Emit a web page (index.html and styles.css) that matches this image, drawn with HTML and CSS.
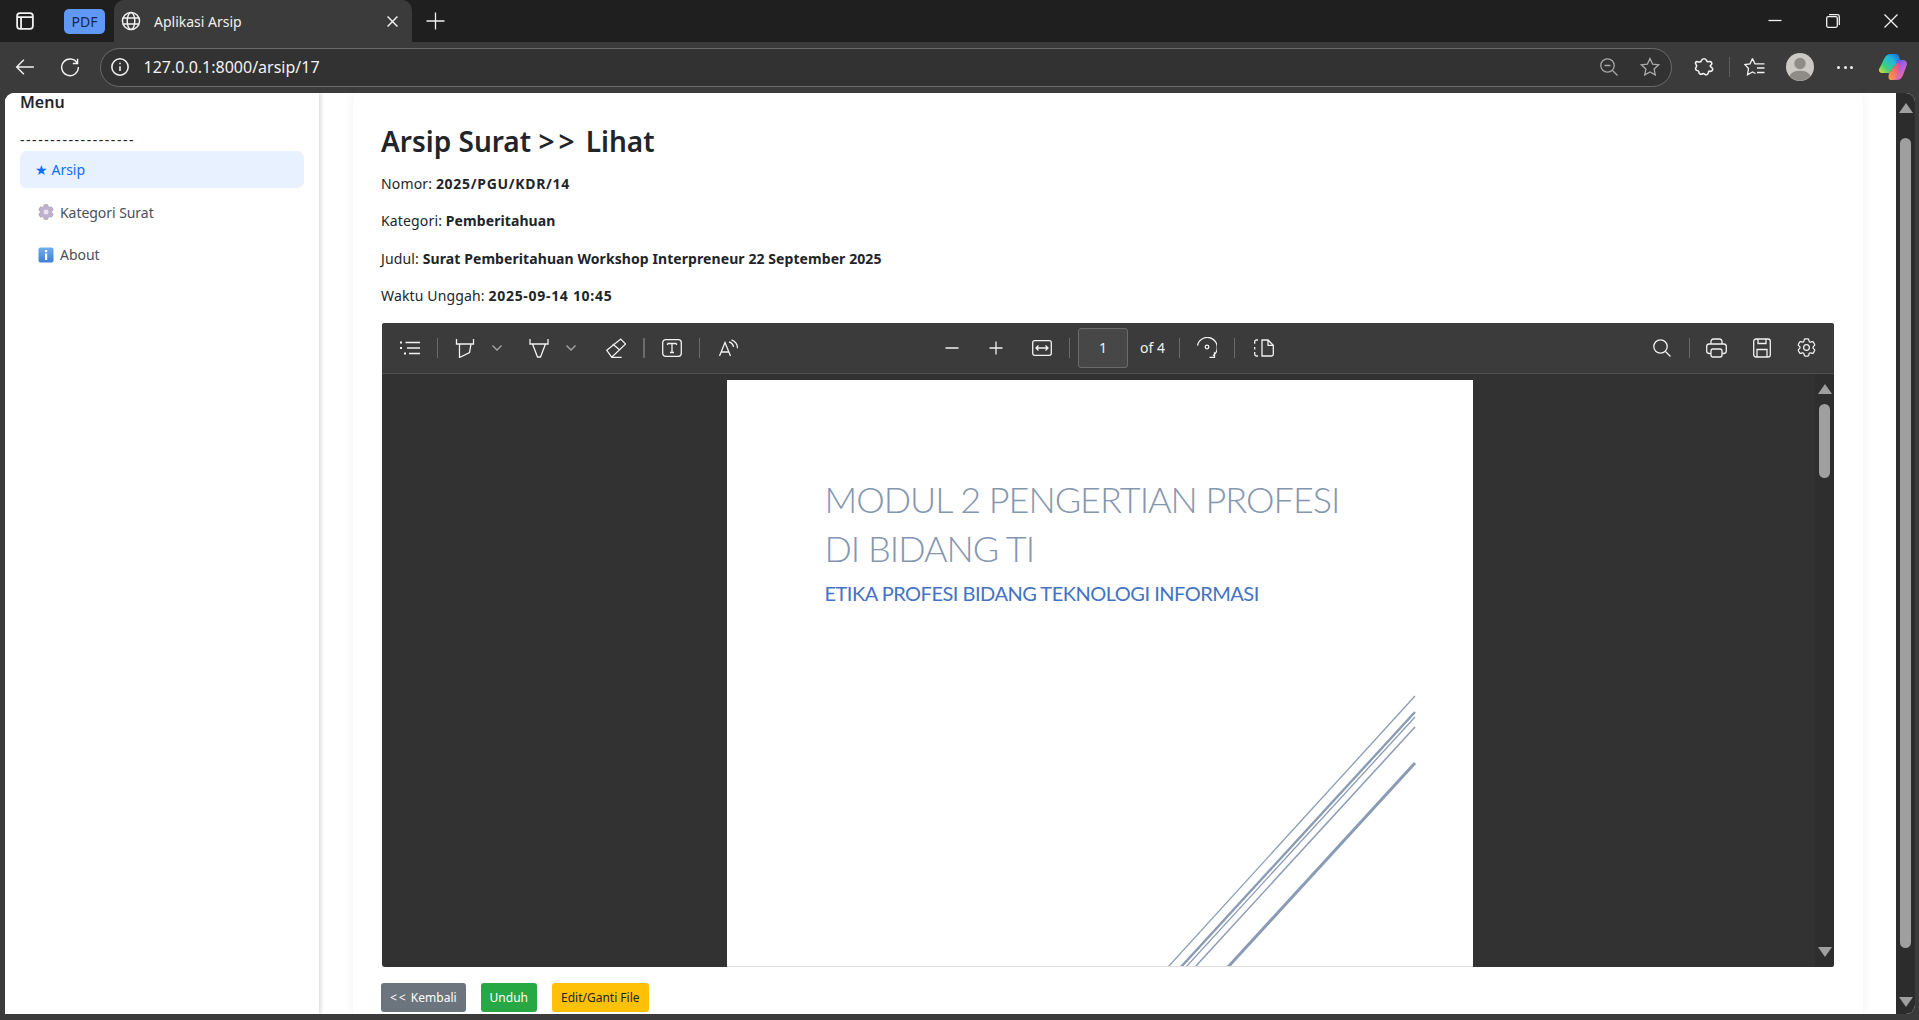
FILE: index.html
```html
<!DOCTYPE html>
<html lang="en">
<head>
<meta charset="UTF-8">
<meta name="viewport" content="width=device-width, initial-scale=1.0">
<title>Aplikasi Arsip</title>
<link rel="stylesheet" href="styles.css">
</head>
<body>

<div class="tabstrip">
  <svg class="ic ic-bold strip-panel" width="18" height="18" viewBox="0 0 16 16"><rect x="1" y="1" width="14" height="14" rx="2.500"/><path d="M1 4.500h14M4.500 4.500V15"/></svg>
  <span class="pdf-pill">PDF</span>
  <div class="tab">
    <svg class="ic" width="20" height="20" viewBox="0 0 18 18"><circle cx="9" cy="9" r="7.700"/><ellipse cx="9" cy="9" rx="3.400" ry="7.700"/><path d="M1.800 6.300h14.400M1.800 11.700h14.400"/></svg>
    <span class="tab-title">Aplikasi Arsip</span>
    <svg class="ic tab-close" width="11" height="11" viewBox="0 0 10 10"><path d="M.5.5l9 9M9.500.5l-9 9"/></svg>
  </div>
  <svg class="ic strip-new" width="19" height="18" viewBox="0 0 19 18"><path d="M9.500 .5v17M.5 9h18"/></svg>
  <div class="win-controls">
    <svg class="ic" width="14" height="14" viewBox="0 0 14 14"><path d="M.5 6.500h13"/></svg>
    <svg class="ic" width="14" height="14" viewBox="0 0 14 14"><rect x=".7" y="2.700" width="10.600" height="10.600" rx="1.500"/><path d="M3 .7h8.500a1.800 1.800 0 0 1 1.800 1.800V11"/></svg>
    <svg class="ic" width="14" height="14" viewBox="0 0 14 14"><path d="M.5.5l13 13M13.500.5l-13 13"/></svg>
  </div>
</div>

<div class="browserbar">
  <svg class="ic nav-back" width="20" height="18" viewBox="0 0 18 16"><path d="M17 8H1.500M8 1.500L1.500 8 8 14.500"/></svg>
  <svg class="ic nav-reload" width="20" height="20" viewBox="0 0 18 18"><path d="M15.500 5.500A7.500 7.500 0 1 0 16.500 9M11.500 5.800h4.300V1.500"/></svg>
  <div class="addressbar">
    <svg class="ic" width="18" height="18" viewBox="0 0 15 15"><circle cx="7.500" cy="7.500" r="6.800"/><path d="M7.500 6.800v4M7.500 4v1.200"/></svg>
    <span class="url">127.0.0.1:8000/arsip/17</span>
    <svg class="ic ic-dim addr-zoom" width="18" height="18" viewBox="0 0 18 18"><circle cx="7.500" cy="7.500" r="6.700"/><path d="M4.500 7.500h6M12.500 12.500l5 5"/></svg>
    <svg class="ic ic-dim addr-star" width="20" height="20" viewBox="0 0 20 20"><path d="M10 1.500l2.600 5.600 6 .7-4.500 4.100 1.200 6L10 15l-5.300 2.900 1.200-6L1.400 7.800l6-.7z"/></svg>
  </div>
  <svg class="ic bar-ext" width="20" height="20" viewBox="0 0 19 19"><path d="M7 3.500a2.600 2.600 0 0 1 5 0c.3 1 1.700 1 2.700.8 1.600-.2 2.700 1.300 2 2.700-.4.800-1.300.9-1.300 1.700 0 .9 2.400 1 2.400 2.900 0 1.500-1.900 2.300-2.800 1.900-1-.3-1.300.5-1.400 1.400-.3 1.700-1.900 2.600-3.200 1.600-.8-.6-1.300-1.200-2.200-.6-1.700 1.100-3.500.1-3.600-1.700-.1-1-.5-1.300-1.500-1.400-1.500-.2-2.300-1.800-1-3.300.6-.8.6-1.400 0-2.200C.6 5.800 1.700 4 3.500 4.500c1.500.4 3.100.4 3.500-1z"/></svg>
  <span class="bar-sep"></span>
  <svg class="ic bar-fav" width="21" height="20" viewBox="0 0 21 20"><path d="M8.500 1.500L11 6.800h9.500M13 11h7.500M13 15.500h7.500M8.500 1.500L6 6.800l-5.200.7 3.700 4-1 6.300 5-2.800 3 1.500"/></svg>
  <svg class="bar-avatar" width="28" height="28" viewBox="0 0 28 28"><circle cx="14" cy="14" r="14" fill="#cbc9c5"/><circle cx="14" cy="10.500" r="5.700" fill="#8f8b87"/><path d="M3.500 23a11 7.500 0 0 1 21 0 14 14 0 0 1-21 0z" fill="#8f8b87"/></svg>
  <span class="bar-dots"><i></i><i></i><i></i></span>
  <svg class="bar-copilot" width="28" height="26" viewBox="0 0 28 26">
    <defs>
      <linearGradient id="copA" x1="1" y1="0" x2="0" y2="1"><stop offset="0" stop-color="#1f5fd8"/><stop offset=".35" stop-color="#1fb8dc"/><stop offset=".7" stop-color="#3ed07a"/><stop offset="1" stop-color="#f6d83a"/></linearGradient>
      <linearGradient id="copB" x1="0" y1="0" x2=".6" y2="1"><stop offset="0" stop-color="#3a55e0"/><stop offset=".45" stop-color="#a85ae8"/><stop offset="1" stop-color="#f76ca4"/></linearGradient>
      <linearGradient id="copC" x1="1" y1="0" x2="0" y2="1"><stop offset="0" stop-color="#e8487a"/><stop offset="1" stop-color="#f9a24a"/></linearGradient>
    </defs>
    <path d="M12 0h5c1.500 0 2.500.8 3 2.500l1 3.500-11 13H3c-2.500 0-3.500-2-2.800-4.200L5 5C6.500 1.500 9 0 12 0z" fill="url(#copA)"/>
    <path d="M18 6h6c3 0 4.500 2.500 3.800 5L24 21c-1 3-3.500 5-6.500 5H14z" fill="url(#copB)"/>
    <path d="M10 19l8-10c1-.8 2.500 0 2.300 1.500L19 20c-.5 3.500-2.500 6-6 6h-1c-2.500 0-3-2-2-7z" fill="url(#copC)"/>
  </svg>
</div>

<div class="viewport">
  <aside class="sidebar">
    <h5 class="menu-title">Menu</h5>
    <div class="menu-dashes">-------------------</div>
    <a class="nav-item active">★ Arsip</a>
    <a class="nav-item">
      <svg class="nav-gear" width="20" height="20" viewBox="0 0 24 24"><path fill="#bdb1cc" stroke="#9d93ae" stroke-width=".7" d="M9.594 3.940c.09-.542.56-.94 1.110-.94h2.593c.55 0 1.020.398 1.110.94l.213 1.281c.063.374.313.686.645.87.074.04.147.083.22.127.325.196.72.257 1.075.124l1.217-.456a1.125 1.125 0 0 1 1.370.49l1.296 2.247a1.125 1.125 0 0 1-.26 1.431l-1.003.827c-.293.241-.438.613-.43.992a7.723 7.723 0 0 1 0 .255c-.008.378.137.75.43.991l1.004.827c.424.35.534.955.26 1.430l-1.298 2.247a1.125 1.125 0 0 1-1.369.491l-1.217-.456c-.355-.133-.75-.072-1.076.124a6.470 6.470 0 0 1-.22.128c-.331.183-.581.495-.644.869l-.213 1.281c-.09.543-.56.94-1.110.94h-2.594c-.55 0-1.019-.398-1.110-.94l-.213-1.281c-.062-.374-.312-.686-.644-.87a6.520 6.520 0 0 1-.22-.127c-.325-.196-.72-.257-1.076-.124l-1.217.456a1.125 1.125 0 0 1-1.369-.49l-1.297-2.247a1.125 1.125 0 0 1 .26-1.431l1.004-.827c.292-.24.437-.613.43-.991a6.932 6.932 0 0 1 0-.255c.007-.38-.138-.751-.43-.992l-1.004-.827a1.125 1.125 0 0 1-.26-1.430l1.297-2.247a1.125 1.125 0 0 1 1.370-.491l1.216.456c.356.133.751.072 1.076-.124.072-.044.146-.086.22-.128.332-.183.582-.495.644-.869l.214-1.280Z"/><circle cx="12" cy="12" r="3" fill="#e8e3ee"/></svg>
      Kategori Surat
    </a>
    <a class="nav-item">
      <svg class="nav-icon" width="16" height="16" viewBox="0 0 16 16">
        <defs><linearGradient id="infoBg" x1="0" y1="0" x2="0" y2="1"><stop offset="0" stop-color="#6fb0ee"/><stop offset="1" stop-color="#3f7fd6"/></linearGradient></defs>
        <rect x=".5" y=".5" width="15" height="15" rx="2" fill="url(#infoBg)"/><rect x="7" y="3" width="2.200" height="2.200" fill="#fff"/><rect x="7" y="6.500" width="2.200" height="6.500" fill="#fff"/>
      </svg>
      About
    </a>
  </aside>

  <main class="content">
    <div class="card">
      <h3 class="page-title">Arsip Surat <span class="title-gt">&gt;&gt;</span> Lihat</h3>
      <p class="field">Nomor: <b class="num">2025/PGU/KDR/14</b></p>
      <p class="field">Kategori: <b>Pemberitahuan</b></p>
      <p class="field">Judul: <b>Surat Pemberitahuan Workshop Interpreneur 22 September 2025</b></p>
      <p class="field">Waktu Unggah: <b class="num">2025-09-14 10:45</b></p>

      <div class="pdf-viewer">
        <div class="pdf-toolbar">
          <div class="pdf-group pdf-left">
            <span class="tb-btn"><svg class="ic" width="22" height="20" viewBox="0 0 22 20"><path d="M6.500 4.500H21M8 10h13M10 15.500h11"/><path class="dot" d="M1 3.500h2v2H1zM1 9h2v2H1zM5 14.500h2v2H5z"/></svg></span>
            <span class="tb-sep"></span>
            <span class="tb-btn"><svg class="ic" width="20" height="20" viewBox="0 0 20 20"><path d="M1.500 1v5h17V1M4.500 6v13.500l10-5 1.500-8.500"/></svg></span>
            <span class="tb-chev"><svg class="ic ic-dim" width="10" height="6" viewBox="0 0 10 6"><path d="M.5.5L5 5 9.500.5"/></svg></span>
            <span class="tb-btn gap-10"><svg class="ic" width="20" height="20" viewBox="0 0 20 20"><path d="M1 1v5h18V1M3.500 6l5 13h3l5-13"/></svg></span>
            <span class="tb-chev"><svg class="ic ic-dim" width="10" height="6" viewBox="0 0 10 6"><path d="M.5.5L5 5 9.500.5"/></svg></span>
            <span class="tb-btn gap-13"><svg class="ic" width="20" height="20" viewBox="0 0 20 20"><path d="M.8 12.300L14.700 1l5 5L5.700 19.200zM6.700 6L14 12.300M5.700 19.500h10"/></svg></span>
            <span class="tb-sep tb-sep-wide"></span>
            <span class="tb-btn"><svg class="ic" width="20" height="18" viewBox="0 0 20 18"><rect x=".7" y=".7" width="18.600" height="16.600" rx="3"/><path d="M5.500 4.500h9M5.500 4.500v1.500M14.500 4.500v1.500M10 4.500v9M8 13.500h4"/></svg></span>
            <span class="tb-sep"></span>
            <span class="tb-btn gap-2"><svg class="ic" width="20" height="20" viewBox="0 0 20 20"><path d="M.5 18L6 4.500 11.500 18M2.500 14h7M10 4a6 6 0 0 1 4.500 5M12.500 1.800a9 9 0 0 1 6 8.500"/></svg></span>
          </div>
          <div class="pdf-group">
            <span class="tb-btn"><svg class="ic" width="14" height="14" viewBox="0 0 14 14"><path d="M.5 7h13"/></svg></span>
            <span class="tb-btn gap-8"><svg class="ic" width="14" height="14" viewBox="0 0 14 14"><path d="M.5 7h13M7 .5v13"/></svg></span>
            <span class="tb-btn gap-10"><svg class="ic" width="20" height="16" viewBox="0 0 20 16"><rect x=".7" y=".7" width="18.600" height="14.600" rx="2"/><path d="M4 8h12M6.500 5.500L4 8l2.500 2.500M13.500 5.500L16 8l-2.500 2.500"/></svg></span>
            <span class="tb-sep"></span>
            <span class="page-input">1</span>
            <span class="page-count">of 4</span>
            <span class="tb-sep tb-sep-far"></span>
            <span class="tb-btn"><svg class="ic" width="20" height="22" viewBox="0 0 20 22"><path d="M.5 8.500A10 10 0 1 1 16 18.700M12.500 20.300h5v-5"/><circle cx="10" cy="10" r="1.800"/></svg></span>
            <span class="tb-sep"></span>
            <span class="tb-btn gap-2"><svg class="ic" width="20" height="18" viewBox="0 0 20 18"><path d="M4 1H2.500A1.800 1.800 0 0 0 .7 2.800v2M.7 8v2.500M.7 13v2.200A1.800 1.800 0 0 0 2.500 17H4"/><path d="M8 1h6l5.300 5.300v8.900a1.800 1.800 0 0 1-1.800 1.800H8zM14 1v5.300h5.300"/></svg></span>
          </div>
          <div class="pdf-group pdf-right">
            <span class="tb-btn"><svg class="ic" width="18" height="18" viewBox="0 0 18 18"><circle cx="7.500" cy="7.500" r="6.700"/><path d="M12.500 12.500l5 5"/></svg></span>
            <span class="tb-sep"></span>
            <span class="tb-btn"><svg class="ic" width="21" height="20" viewBox="0 0 21 20"><path d="M5 6V3.500A2.500 2.500 0 0 1 7.500 1h6A2.500 2.500 0 0 1 16 3.500V6M5 15.500H3A2.500 2.500 0 0 1 .7 13V8.500A2.500 2.500 0 0 1 3 6h15a2.500 2.500 0 0 1 2.300 2.500V13a2.500 2.500 0 0 1-2.300 2.500h-2"/><rect x="5" y="11" width="11" height="8" rx="2"/></svg></span>
            <span class="tb-btn gap-9"><svg class="ic" width="18" height="20" viewBox="0 0 18 20"><path d="M3 1h12a2.300 2.300 0 0 1 2.300 2.300v13.400A2.300 2.300 0 0 1 15 19H3a2.300 2.300 0 0 1-2.300-2.300V3.300A2.300 2.300 0 0 1 3 1zM5 1v4.500h8V1M4 19v-7.500h10V19"/></svg></span>
            <span class="tb-btn gap-9"><svg class="ic" width="23" height="23" viewBox="0 0 24 24"><path d="M9.594 3.940c.09-.542.56-.94 1.110-.94h2.593c.55 0 1.020.398 1.110.94l.213 1.281c.063.374.313.686.645.87.074.04.147.083.22.127.325.196.72.257 1.075.124l1.217-.456a1.125 1.125 0 0 1 1.370.49l1.296 2.247a1.125 1.125 0 0 1-.26 1.431l-1.003.827c-.293.241-.438.613-.43.992a7.723 7.723 0 0 1 0 .255c-.008.378.137.75.43.991l1.004.827c.424.35.534.955.26 1.430l-1.298 2.247a1.125 1.125 0 0 1-1.369.491l-1.217-.456c-.355-.133-.75-.072-1.076.124a6.470 6.470 0 0 1-.22.128c-.331.183-.581.495-.644.869l-.213 1.281c-.09.543-.56.94-1.110.94h-2.594c-.55 0-1.019-.398-1.110-.94l-.213-1.281c-.062-.374-.312-.686-.644-.87a6.520 6.520 0 0 1-.22-.127c-.325-.196-.72-.257-1.076-.124l-1.217.456a1.125 1.125 0 0 1-1.369-.49l-1.297-2.247a1.125 1.125 0 0 1 .26-1.431l1.004-.827c.292-.24.437-.613.43-.991a6.932 6.932 0 0 1 0-.255c.007-.38-.138-.751-.43-.992l-1.004-.827a1.125 1.125 0 0 1-.26-1.430l1.297-2.247a1.125 1.125 0 0 1 1.370-.491l1.216.456c.356.133.751.072 1.076-.124.072-.044.146-.086.22-.128.332-.183.582-.495.644-.869l.214-1.280Z"/><circle cx="12" cy="12" r="3"/></svg></span>
          </div>
        </div>
        <div class="pdf-body">
          <div class="pdf-canvas">
            <div class="pdf-page">
              <div class="doc-title">MODUL 2 PENGERTIAN PROFESI<br>DI BIDANG TI</div>
              <div class="doc-sub">ETIKA PROFESI BIDANG TEKNOLOGI INFORMASI</div>
              <svg class="doc-lines" width="746" height="587" viewBox="0 0 746 587">
                <path stroke-width="1.300" d="M688 316L441 587"/>
                <path stroke-width="2.400" d="M688 332L454 587"/>
                <path stroke-width="1.300" d="M688 337L459 587"/>
                <path stroke-width="1.500" d="M688 347L468 587"/>
                <path stroke-width="3" d="M688 383L501 587"/>
              </svg>
            </div>
          </div>
          <div class="pdf-scroll">
            <span class="arrow-up"></span>
            <span class="pdf-thumb"></span>
            <span class="arrow-down"></span>
          </div>
        </div>
      </div>

      <div class="actions">
        <a class="btn btn-grey"><span class="btn-lt">&lt;&lt;</span> Kembali</a>
        <a class="btn btn-green">Unduh</a>
        <a class="btn btn-yellow">Edit/Ganti File</a>
      </div>
    </div>
  </main>

  <div class="page-scroll">
    <span class="arrow-up"></span>
    <span class="page-thumb"></span>
    <span class="arrow-down"></span>
  </div>
</div>

</body>
</html>
```

FILE: styles.css
```css
* {
box-sizing: border-box;
}
html, body {
height: 100%;
}
body {
margin: 0;
height: 1020px;
overflow: hidden;
display: flex;
flex-direction: column;
background-color: #3b3b3b;
font-family: "Noto Sans", "Open Sans", sans-serif;
color: #212529;
}

/* icons */
.ic {
fill: none;
stroke: #f2f2f2;
stroke-width: 1.3;
flex: none;
display: block;
}
.ic-dim {
stroke: #a8a8a8;
}
.ic-bold {
stroke-width: 1.6;
}
.ic .dot {
fill: #f2f2f2;
stroke: none;
}

/* browser tab row */
.tabstrip {
height: 42px;
flex: none;
background-color: #1f1f1f;
display: flex;
align-items: center;
position: relative;
}
.strip-panel {
margin-left: 16px;
}
.pdf-pill {
margin-left: 30px;
margin-top: 1px;
width: 41px;
height: 25px;
background-color: #5f98f5;
color: #13294b;
border-radius: 5px;
font-size: 14px;
line-height: 25px;
text-align: center;
}
.tab {
margin-left: 8.500px;
width: 298.500px;
height: 42px;
background-color: #3b3b3b;
border-radius: 10px 10px 0 0;
display: flex;
align-items: center;
padding-left: 7.500px;
padding-right: 14px;
}
.tab-title {
margin-left: 13px;
font-size: 14px;
color: #f0f0f0;
flex: 1;
}
.strip-new {
margin-left: 13.500px;
}
.win-controls {
margin-left: auto;
padding-right: 21px;
display: flex;
gap: 44px;
}

/* browser address row */
.browserbar {
height: 51px;
flex: none;
background-color: #3b3b3b;
display: flex;
align-items: center;
padding-bottom: 1px;
}
.nav-back {
margin-left: 15px;
}
.nav-reload {
margin-left: 25px;
}
.addressbar {
margin-left: 20px;
width: 1572px;
height: 39px;
border: 1.5px solid #6b6b6b;
border-radius: 20px;
background-color: #323232;
display: flex;
align-items: center;
padding-left: 9.500px;
}
.url {
margin-left: 15px;
font-size: 16px;
color: #f2f2f2;
}
.addr-zoom {
margin-left: auto;
}
.addr-star {
margin-left: 22px;
margin-right: 11px;
}
.bar-ext {
margin-left: 22px;
stroke-width: 1.5;
}
.bar-sep {
margin-left: 15px;
width: 1px;
height: 20px;
background-color: #5e5e5e;
}
.bar-fav {
margin-left: 14px;
}
.bar-avatar {
margin-left: 21px;
}
.bar-dots {
margin-left: 23px;
width: 16px;
display: flex;
justify-content: space-between;
}
.bar-dots i {
width: 3px;
height: 3px;
border-radius: 50%;
background-color: #f0f0f0;
}
.bar-copilot {
margin-left: 26px;
}

/* page area */
.viewport {
flex: none;
height: 921px;
margin: 0 4px 0 5px;
background-color: #fff;
border-radius: 9px 9px 9px 0;
overflow: hidden;
display: flex;
}
.sidebar {
width: 314px;
flex: none;
padding: 0 15px;
background-color: #fff;
box-shadow: 2px 0 4px rgba(0, 0, 0, .14);
position: relative;
}
.menu-title {
margin: 0;
font-size: 16px;
line-height: 18px;
font-weight: 600;
color: #212529;
}
.menu-dashes {
margin-top: 20px;
font-size: 14px;
line-height: 18px;
letter-spacing: 1.550px;
color: #212529;
white-space: nowrap;
}
.nav-item {
margin-top: 5.500px;
height: 37px;
border-radius: 7px;
display: flex;
align-items: center;
padding-left: 16px;
font-size: 14px;
letter-spacing: -.05px;
color: #495057;
}
.nav-item.active {
margin-top: 2px;
background-color: #e7f1ff;
color: #0d6efd;
padding-left: 15px;
}
.nav-icon {
margin-left: 2px;
margin-right: 6px;
flex: none;
}
.nav-gear {
margin-right: 4px;
flex: none;
}

/* main column */
.content {
flex: 1;
min-width: 0;
padding: 0 33px 0 34px;
background-color: #fff;
}
.card {
margin-top: -1px;
height: 925px;
background-color: #fff;
border-radius: 8px;
box-shadow: 0 0 12px rgba(0, 0, 0, .06);
padding: 0 28px;
}
.page-title {
margin: 0;
padding-top: 31px;
font-size: 28px;
line-height: 36px;
font-weight: 600;
}
.title-gt {
letter-spacing: 4px;
}
.field {
margin: 0;
padding-top: 17px;
font-size: 14px;
line-height: 20.500px;
letter-spacing: .15px;
}
.field:first-of-type {
padding-top: 14.500px;
}
.field b {
font-weight: 700;
letter-spacing: .08px;
}
.field b.num {
letter-spacing: .7px;
}

/* pdf viewer */
.pdf-viewer {
margin-top: 16px;
margin-left: 1px;
width: 1452px;
height: 644px;
background-color: #323232;
border-radius: 3px;
overflow: hidden;
display: flex;
flex-direction: column;
}
.pdf-toolbar {
height: 51px;
flex: none;
background-color: #3b3b3b;
border-bottom: 1px solid #4f4f4f;
display: flex;
align-items: center;
padding: 0 9.500px;
}
.pdf-group {
display: flex;
align-items: center;
}
.pdf-left, .pdf-right {
flex: 1;
}
.pdf-right {
justify-content: flex-end;
}
.tb-btn {
width: 36px;
height: 36px;
flex: none;
display: flex;
align-items: center;
justify-content: center;
}
.tb-chev {
width: 28px;
height: 36px;
flex: none;
display: flex;
align-items: center;
justify-content: center;
}
.tb-sep {
width: 1px;
height: 20px;
margin: 0 9px;
flex: none;
background-color: #6a6a6a;
}
.tb-sep-wide {
width: 2px;
}
.tb-sep-far {
margin-left: 14.500px;
}
.gap-2 {
margin-left: 2px;
}
.gap-8 {
margin-left: 8.500px;
}
.gap-9 {
margin-left: 9px;
}
.gap-10 {
margin-left: 10px;
}
.gap-13 {
margin-left: 13px;
}
.page-input {
width: 50px;
height: 40px;
margin-left: -1px;
flex: none;
background-color: #474747;
border: 1px solid #6a6a6a;
border-radius: 3px;
color: #f2f2f2;
font-size: 14px;
line-height: 38px;
text-align: center;
}
.page-count {
margin-left: 12px;
color: #f2f2f2;
font-size: 14px;
}
.pdf-body {
flex: 1;
min-height: 0;
display: flex;
}
.pdf-canvas {
flex: 1;
min-width: 0;
padding-top: 6px;
display: flex;
justify-content: center;
}
.pdf-page {
width: 746px;
height: 587px;
margin-left: 2px;
background-color: #fff;
border-bottom: 1px solid #ddd;
padding: 95px 0 0 98px;
position: relative;
overflow: hidden;
}
.doc-title {
font-family: "Lato", sans-serif;
font-weight: 300;
font-size: 36px;
line-height: 49.500px;
letter-spacing: -1px;
color: #8496b0;
white-space: nowrap;
}
.doc-sub {
margin-top: 5px;
font-family: "Lato", sans-serif;
font-size: 20px;
line-height: 28px;
letter-spacing: -.5px;
color: #4472c4;
white-space: nowrap;
}
.doc-lines {
position: absolute;
left: 0;
top: 0;
fill: none;
stroke: #8a9cb5;
}
.pdf-scroll {
width: 19px;
flex: none;
background-color: #2e2e2e;
padding: 10px 3px;
display: flex;
flex-direction: column;
align-items: center;
}
.pdf-thumb {
width: 11px;
height: 74px;
margin-top: 10px;
margin-bottom: auto;
border-radius: 6px;
background-color: #9f9f9f;
}
.arrow-up {
width: 0;
height: 0;
flex: none;
border-left: 7px solid transparent;
border-right: 7px solid transparent;
border-bottom: 10px solid #9f9f9f;
}
.arrow-down {
width: 0;
height: 0;
flex: none;
border-left: 7px solid transparent;
border-right: 7px solid transparent;
border-top: 10px solid #9f9f9f;
}

/* buttons under the viewer */
.actions {
margin-top: 16px;
display: flex;
gap: 15px;
}
.btn {
height: 29px;
padding: 0 9px;
border-radius: 3px;
font-size: 12px;
line-height: 29px;
color: #fff;
}
.btn-lt {
letter-spacing: 2px;
}
.btn-grey {
background-color: #6c757d;
}
.btn-green {
background-color: #28a745;
}
.btn-yellow {
background-color: #ffc107;
color: #212529;
}

/* window scrollbar */
.page-scroll {
width: 19px;
flex: none;
background-color: #2c2c2c;
padding: 10px 2px 7px;
display: flex;
flex-direction: column;
align-items: center;
}
.page-thumb {
width: 11px;
height: 810px;
margin-top: 25px;
margin-bottom: auto;
border-radius: 6px;
background-color: #9f9f9f;
}
```
